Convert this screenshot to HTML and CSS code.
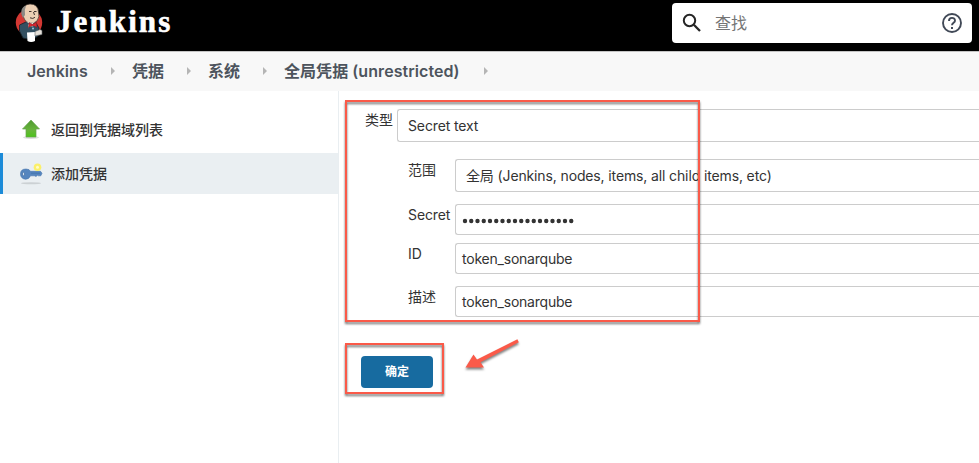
FILE: index.html
```html
<!DOCTYPE html>
<html lang="zh-CN">
<head>
<meta charset="utf-8">
<title>Jenkins</title>
<link rel="stylesheet" href="styles.css">
</head>
<body>
<header class="header">
  <svg class="butler" width="28" height="40" viewBox="0 0 28 40">
    <circle cx="14" cy="19.500" r="13.200" fill="#d33833"/>
    <path d="M4.500 22 L13 18 L21 20 L24 25 L23 33 L17 37 L8 35 L4.500 28 Z" fill="#335061" stroke="#16232b" stroke-width=".8"/>
    <path d="M7.500 8 Q8 1.500 15 1 Q23 1 23.500 9 Q25 14 22 18 Q19 21 14 20 Q9 18 8.500 14 Q6 12 7.500 8Z" fill="#ecd0b4" stroke="#3a302b" stroke-width=".7"/>
    <path d="M6.500 7 Q8 3 11 3 Q9 7 10 12 L8 15 Q5.500 11 6.500 7Z" fill="#8b8a85"/>
    <path d="M14 8.500 h2.500 M19 8.500 h2.500 M15 14.800 q3 1.500 5-.5 M18.500 9 l1 3" stroke="#40342f" stroke-width="1" fill="none"/>
    <path d="M11 18 l3 2.500 -1 2 2 6 4-6 -1-2 2-1.500 q-4 2-9-1z" fill="#f2f2ee"/>
    <path d="M14 19.500 l3.500 1.800 4-2 .5 5-4.500-1.500-4 2z" fill="#d9262f" stroke="#731d21" stroke-width=".5"/>
    <path d="M14 24 L20 23 L20 29 L14 30Z" fill="#335061"/>
    <path d="M12 29.500 L20 29 L20 38 Q16 40 12.500 38Z" fill="#fff"/>
    <path d="M20 28.500 l5-2 2 1 v4 l-7 1.500z" fill="#e4dfd8" stroke="#5e6669" stroke-width=".6"/>
    <circle cx="18" cy="25.500" r="1" fill="#9fc6df"/>
  </svg>
  <span class="brand">Jenkins</span>
  <div class="search">
    <svg class="search-icon" width="20" height="20" viewBox="0 0 20 20" fill="none" stroke="#252525" stroke-width="2">
      <circle cx="7.500" cy="7.500" r="5.700"/><path d="M11.800 11.800 L18 18" stroke-width="2.300"/>
    </svg>
    <span class="search-hint">查找</span>
    <svg width="20" height="20" viewBox="0 0 20 20" fill="none" stroke="#414957" stroke-width="1.900">
      <circle cx="10" cy="10" r="9"/><path d="M7 8 C7 3.900 13 3.900 13 7.700 C13 9.800 10 9.900 10 12.300"/><path d="M10 14 v2" stroke-width="2"/>
    </svg>
  </div>
</header>
<nav class="crumbs">
  <span class="crumb c1">Jenkins</span><i></i>
  <span class="crumb c2">凭据</span><i></i>
  <span class="crumb c3">系统</span><i></i>
  <span class="crumb c4">全局凭据 (unrestricted)</span><i></i>
</nav>
<div class="page">
  <aside class="side">
    <a class="task">
      <svg class="lift" width="24" height="24" viewBox="0 0 24 24">
        <defs><linearGradient id="leaf" x1="0" y1="0" x2="0" y2="1"><stop offset="0" stop-color="#4f9a30"/><stop offset=".6" stop-color="#69b53c"/><stop offset="1" stop-color="#4cc41a"/></linearGradient></defs>
        <ellipse cx="12" cy="20.500" rx="8" ry="1.500" fill="#ddd"/>
        <path d="M12 3 L20.500 12 H17 V20 H7 V12 H3.500Z" fill="url(#leaf)" stroke="#69a552" stroke-width=".7"/>
      </svg>
      <span>返回到凭据域列表</span>
    </a>
    <a class="task active">
      <svg width="24" height="24" viewBox="0 0 24 24">
        <ellipse cx="12" cy="21.300" rx="10" ry="1" fill="#ccd1d4"/>
        <path d="M1.500 12 Q1.500 7 7 7 Q10.500 7 11.500 9.300 H21.500 L23 11.300 L21.800 13.800 H19.500 L18.500 13.300 L17 14.500 L15.500 13.800 H11.500 Q10 17.300 6.500 17.300 Q1.500 16.500 1.500 12Z" fill="#5585be" stroke="#4474ad" stroke-width=".6"/>
        <ellipse cx="4.500" cy="12" rx="1.100" ry="1.700" fill="#d3e1f0" stroke="#3a669b" stroke-width=".6"/>
        <path d="M12 11.200 h9" stroke="#3e6ea9" stroke-width=".7"/>
        <circle cx="18.500" cy="5.300" r="3.800" fill="#fbf06a"/><circle cx="18.500" cy="5.300" r="1.500" fill="#fffbc8"/>
      </svg>
      <span>添加凭据</span>
    </a>
  </aside>
  <main class="main">
    <div class="row kind"><label>类型</label><div class="field select">Secret text</div></div>
    <div class="row sub scope"><label>范围</label><div class="field select">全局 (Jenkins, nodes, items, all child items, etc)</div></div>
    <div class="row sub secret"><label>Secret</label><div class="field"><svg class="dots" width="114" height="6"><path d="M3 3 H113" /></svg></div></div>
    <div class="row sub ident"><label>ID</label><div class="field">token_sonarqube</div></div>
    <div class="row sub desc"><label>描述</label><div class="field">token_sonarqube</div></div>
    <button class="ok">确定</button>
  </main>
</div>
<div class="mark mark-form"></div>
<div class="mark mark-ok"></div>
<svg class="arrow" width="66" height="44" viewBox="0 0 66 44">
  <path d="M57.400 6.200 L58.800 9.200 L20.500 29.300 L24 34.500 L5.500 34.500 L13.500 21.500 L17 26.500Z" fill="#fa5a49"/>
</svg>
</body>
</html>
```
FILE: styles.css
```css
* { box-sizing: border-box; }
body {
  margin: 0;
  height: 463px;
  overflow: hidden;
  position: relative;
  background: #fff;
  color: #333;
  font: 14px/20px Inter, "Noto Sans CJK SC", sans-serif;
}
svg { flex: none; }
.header {
  height: 51px;
  background: #000;
  display: flex;
  align-items: flex-start;
  padding: 3px 7px 0 15px;
}
.brand {
  margin: 1px 0 0 13px;
  color: #fff;
  font: bold 31px/36px "Liberation Serif", serif;
  letter-spacing: 2.1px;
  -webkit-text-stroke: .6px #fff;
}
.search {
  margin-left: auto;
  width: 300px;
  height: 40px;
  border-radius: 4px;
  background: #fff;
  display: flex;
  align-items: center;
  padding: 0 10px;
}
.search-hint { margin: 0 auto 0 13px; color: #757575; font-size: 16px; }
.crumbs {
  height: 40px;
  background: #f8f8f8;
  border-top: 1px solid #c4c4c4;
  display: flex;
  align-items: center;
  padding: 0 0 1px 27px;
  color: #4d545d;
  font-size: 16px;
  font-weight: 600;
}
.crumb { white-space: nowrap; }
.crumb.c1 { width: 84px; letter-spacing: .05px; }
.crumb.c2, .crumb.c3 { width: 55px; }
.crumb.c4 { width: 200px; letter-spacing: .06px; }
.crumbs i {
  margin-right: 17px;
  border: solid transparent;
  border-width: 4px 0 4px 4px;
  border-left-color: #b5b5b5;
}
.page { display: flex; height: 372px; }
.side {
  width: 339px;
  border-right: 1px solid #e9eef1;
  padding-top: 18px;
}
.task {
  height: 41px;
  margin-bottom: 3px;
  padding-left: 19px;
  display: flex;
  align-items: center;
  gap: 8px;
  font-weight: 500;
}
.task.active {
  background: #eaeff2;
  border-left: 3px solid #1c8bd8;
  padding-left: 16px;
}
.lift { margin-bottom: 2px; }
.main { flex: 1; min-width: 0; padding: 18px 0 0 26px; }
.row { display: flex; align-items: flex-start; }
.row label { flex: none; width: 32px; padding-top: 1px; letter-spacing: -.1px; white-space: nowrap; }
.row.sub { padding-left: 43px; }
.row.sub label { width: 47px; }
.field {
  flex: 1;
  height: 31px;
  border: 1px solid #ccc;
  border-right: 0;
  border-radius: 3px 0 0 3px;
  padding: 0 6px;
  line-height: 30px;
  letter-spacing: -.22px;
  white-space: nowrap;
}
.field.select { height: 33px; padding: 0 10px; line-height: 32px; letter-spacing: -.13px; }
.scope { margin-top: 17px; }
.secret { margin-top: 12px; }
.ident { margin-top: 8px; }
.desc { margin-top: 12px; }
.dots {
  display: block;
  margin-top: 13px;
  fill: none;
  stroke: #333;
  stroke-width: 4.4px;
  stroke-linecap: round;
  stroke-dasharray: 0 6.25;
}
.ok {
  display: block;
  width: 72px;
  height: 32px;
  margin: 39px 0 0 -4px;
  border: 0;
  border-radius: 4px;
  background: #176ba0;
  color: #fff;
  font: bold 12px/32px Inter, "Noto Sans CJK SC", sans-serif;
  padding: 0;
}
.mark {
  position: absolute;
  left: 345px;
  border: 2px solid #fa5a49;
  filter: drop-shadow(0 2px 1px rgba(0, 0, 0, .55));
}
.mark-form { top: 100px; width: 355px; height: 222px; }
.mark-ok { top: 343px; width: 99px; height: 51px; }
.arrow {
  position: absolute;
  left: 460px;
  top: 333px;
  filter: drop-shadow(0 2.500px 1px rgba(0, 0, 0, .5));
}
```
